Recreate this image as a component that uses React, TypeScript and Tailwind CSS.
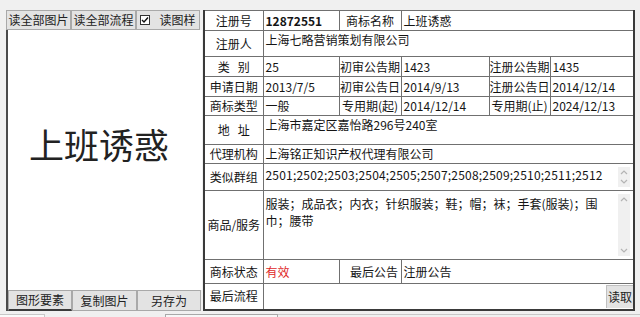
import React from "react";

function Btn({ label, className = "" }: { label: React.ReactNode; className?: string }) {
  return (
    <div className={"flex items-center justify-center bg-[#e3e3e3] border border-[#a9a9a9] text-[#222] " + className}>
      {label}
    </div>
  );
}

function Scroll() {
  return (
    <div className="w-[12px] my-[3px] mr-[3px] bg-[#f0f0f0] flex flex-col justify-between items-center py-[3px]">
      <svg width="8" height="5" viewBox="0 0 8 5">
        <path d="M1 4 L4 1 L7 4" fill="none" stroke="#b4b4b4" strokeWidth="1.2" />
      </svg>
      <svg width="8" height="5" viewBox="0 0 8 5">
        <path d="M1 1 L4 4 L7 1" fill="none" stroke="#b4b4b4" strokeWidth="1.2" />
      </svg>
    </div>
  );
}

const L = "border border-[#707070] text-center align-middle p-0 whitespace-nowrap";
const V = "border border-[#707070] align-middle pl-[2px] pr-0 py-0 whitespace-nowrap";

export default function App() {
  return (
    <div className="w-[640px] h-[317px] bg-[#f0f0f0] overflow-hidden text-[12px] leading-[16px] text-[#141414] font-['Noto_Sans_CJK_SC',sans-serif] flex flex-col">
      <div className="flex pt-[10px] pl-[6px] h-[311px]">
        {/* left panel */}
        <div className="w-[196px] flex flex-col">
          <div className="flex h-[20px]">
            <Btn label="读全部图片" className="w-[65px]" />
            <Btn label="读全部流程" className="w-[65px]" />
            <Btn
              className="w-[64px] gap-[9px]"
              label={
                <>
                  <span className="w-[10px] h-[10px] bg-white border border-[#333] flex items-center justify-center">
                    <svg width="8" height="8" viewBox="0 0 8 8">
                      <path d="M1 4 L3 6 L7 1.5" fill="none" stroke="#111" strokeWidth="1.4" />
                    </svg>
                  </span>
                  <span>读图样</span>
                </>
              }
            />
          </div>
          <div className="flex-1 bg-white border-l-2 border-[#4a4a4a] flex items-center justify-center pb-[32px] pr-[12px]">
            <span className="text-[35px] leading-[40px] text-[#222] font-normal">上班诱惑</span>
          </div>
          <div className="flex h-[21px] border-l-2 border-[#4a4a4a]">
            <Btn label="图形要素" className="w-[64px] border-b-2 border-b-[#3a3a3a]" />
            <Btn label="复制图片" className="w-[65px]" />
            <Btn label="另存为" className="w-[64px]" />
          </div>
        </div>

        {/* right table */}
        <div className="ml-[1px] bg-white h-[301px]">
          <table className="border-collapse table-fixed w-[432px] border-l-2 border-r-2 border-b-2 border-t border-[#3a3a3a]">
            <colgroup>
              <col className="w-[59px]" />
              <col className="w-[76px]" />
              <col className="w-[62px]" />
              <col className="w-[88px]" />
              <col className="w-[61px]" />
              <col className="w-[84px]" />
            </colgroup>
            <tbody>
              <tr className="h-[20px]">
                <td className={L}>注册号</td>
                <td className={V + " font-bold"}>12872551</td>
                <td className={L}>商标名称</td>
                <td className={V} colSpan={3}>上班诱惑</td>
              </tr>
              <tr className="h-[26px]">
                <td className={L}>注册人</td>
                <td className={V + " align-top pt-[1px]"} colSpan={5}>上海七略营销策划有限公司</td>
              </tr>
              <tr className="h-[20px]">
                <td className={L}>类&nbsp;&nbsp;&nbsp;别</td>
                <td className={V}>25</td>
                <td className={L}>初审公告期</td>
                <td className={V}>1423</td>
                <td className={L}>注册公告期</td>
                <td className={V}>1435</td>
              </tr>
              <tr className="h-[20px]">
                <td className={L}>申请日期</td>
                <td className={V}>2013/7/5</td>
                <td className={L}>初审公告日</td>
                <td className={V}>2014/9/13</td>
                <td className={L}>注册公告日</td>
                <td className={V}>2014/12/14</td>
              </tr>
              <tr className="h-[19px]">
                <td className={L}>商标类型</td>
                <td className={V}>一般</td>
                <td className={L}>专用期(起)</td>
                <td className={V}>2014/12/14</td>
                <td className={L}>专用期(止)</td>
                <td className={V}>2024/12/13</td>
              </tr>
              <tr className="h-[29px]">
                <td className={L}>地&nbsp;&nbsp;&nbsp;址</td>
                <td className={V + " align-top pt-[1px]"} colSpan={5}>上海市嘉定区嘉怡路296号240室</td>
              </tr>
              <tr className="h-[19px]">
                <td className={L}>代理机构</td>
                <td className={V} colSpan={5}>上海铭正知识产权代理有限公司</td>
              </tr>
              <tr className="h-[27px]">
                <td className={L}>类似群组</td>
                <td className="border border-[#707070] p-0 align-top" colSpan={5}>
                  <div className="flex h-[26px]">
                    <div className="flex-1 pl-[2px] pt-[3px] whitespace-nowrap overflow-hidden tracking-[0.2px]">
                      2501;2502;2503;2504;2505;2507;2508;2509;2510;2511;2512
                    </div>
                    <Scroll />
                  </div>
                </td>
              </tr>
              <tr className="h-[69px]">
                <td className={L}>商品/服务</td>
                <td className="border border-[#707070] p-0 align-top" colSpan={5}>
                  <div className="flex h-[68px]">
                    <div className="flex-1 pl-[2px] pt-[4px] leading-[17px] whitespace-nowrap overflow-hidden">
                      服装；成品衣；内衣；针织服装；鞋；帽；袜；手套(服装)；围
                      <br />
                      巾；腰带
                    </div>
                    <Scroll />
                  </div>
                </td>
              </tr>
              <tr className="h-[24px]">
                <td className={L}>商标状态</td>
                <td className={V + " text-[#e02828]"}>有效</td>
                <td className={L + " pl-[8px]"}>最后公告</td>
                <td className={V} colSpan={3}>注册公告</td>
              </tr>
              <tr className="h-[26px]">
                <td className={L}>最后流程</td>
                <td className="border border-[#707070] p-0 align-middle" colSpan={5}>
                  <div className="flex justify-end">
                    <div className="w-[27px] h-[23px] bg-[#e3e3e3] border-l border-t border-[#c0c0c0] flex items-center justify-center text-[#222]">
                      读取
                    </div>
                  </div>
                </td>
              </tr>
            </tbody>
          </table>
        </div>
      </div>
      <div className="flex h-[6px] pt-[3px]">
        <div className="w-[45px] border-t border-r border-[#c8c8c8] bg-[#fafafa]" />
        <div className="w-[120px]" />
        <div className="w-[113px] border-t border-l border-r border-[#a8a8a8] bg-[#f7f7f7]" />
        <div className="flex-1 border-t border-[#c8c8c8]" />
      </div>
    </div>
  );
}
